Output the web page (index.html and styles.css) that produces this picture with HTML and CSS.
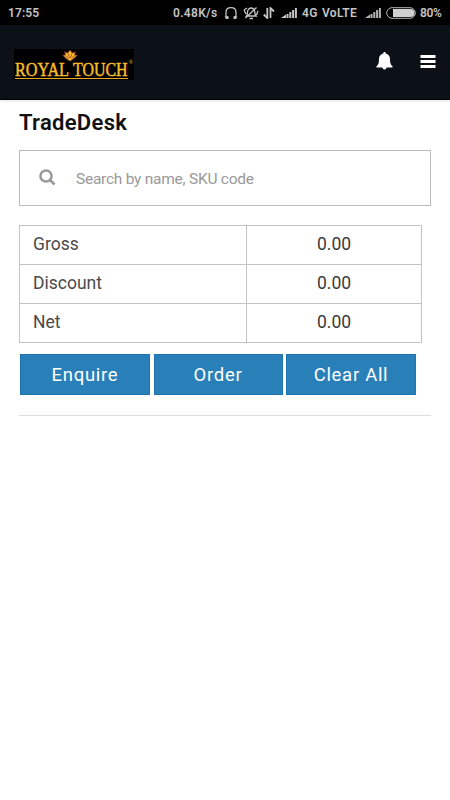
FILE: index.html
```html
<!DOCTYPE html>
<html lang="en">
<head>
    <meta charset="UTF-8">
    <meta name="viewport" content="width=device-width, initial-scale=1.0">
    <title>TradeDesk</title>
    <link rel="stylesheet" href="styles.css">
</head>
<body>
    <div class="status-bar">
        <span class="time">17:55</span>
        <span class="speed">0.48K/s</span>
        <svg class="icon-headphones" width="14" height="14" viewBox="0 0 14 14">
            <path d="M2 11V6.500C2 3.500 4 1.700 7 1.700S12 3.500 12 6.500V11" fill="none" stroke="#c4c4c4" stroke-width="1.300"/>
            <path d="M.7 10.500L4.500 10v3H2zM13.300 10.500L9.500 10v3H12z" fill="#c4c4c4"/>
        </svg>
        <svg class="icon-mute" width="16" height="14" viewBox="0 0 16 14">
            <path d="M3.500 10C5 8.500 4 5.500 5 4C6.500 1.300 10 1.300 11.300 4C12.200 6 11.500 8.500 13 10ZM6.500 12.500h3.500M2.500 12L13.500 1.500M1 4l2 4M15 5l-1.500 4M1 4l3-2" fill="none" stroke="#c4c4c4" stroke-width="1.300"/>
        </svg>
        <svg class="icon-arrows" width="12" height="12" viewBox="0 0 12 12">
            <path d="M4.300 1v10L.8 7.500M7.500 11V1L11 4.500" fill="none" stroke="#c4c4c4" stroke-width="1.800"/>
        </svg>
        <svg class="icon-signal" width="17" height="12" viewBox="0 0 17 12">
            <path d="M0 11l5-3.500V11zM5.500 7h2v4h-2zM8.300 5h2v6h-2zM11.100 3h2v8h-2zM13.900 1h2v10h-2z" fill="#c4c4c4"/>
        </svg>
        <span class="network">4G</span>
        <span class="volte">VoLTE</span>
        <svg class="icon-signal" width="17" height="12" viewBox="0 0 17 12">
            <path d="M0 11l5-3.500V11zM5.500 7h2v4h-2zM8.300 5h2v6h-2zM11.100 3h2v8h-2zM13.900 1h2v10h-2z" fill="#b4b4b4"/>
        </svg>
        <svg class="icon-battery" width="30" height="12" viewBox="0 0 30 12">
            <rect x=".7" y=".7" width="28.600" height="10.600" rx="5.300" fill="none" stroke="#b4b4b4"/>
            <path d="M7 2h17.500a4 4 0 0 1 0 8H7z" fill="#d0d0d0"/>
        </svg>
        <span class="percent">80%</span>
    </div>

    <header class="header">
        <svg class="logo" width="120" height="31" viewBox="0 0 120 31">
            <rect width="120" height="31" fill="#000"/>
            <path d="M56 .8l2.200 3L61.500 2.800l-.8 3 2.600.4L59.500 10 56 12.300 52.500 10 48.700 6.200l2.600-.4-.8-3 3.300 1z" fill="#f6b725" stroke="#5c1430" stroke-width=".8"/>
            <path d="M54.200 4.500l1.300 4.500M57.800 4.500l-1.300 4.500M51.500 6.500l3 3M60.500 6.500l-3 3" stroke="#7a2525" stroke-width=".6"/>
            <g class="logo-text">
                <text x="1" y="26.500" textLength="54" lengthAdjust="spacingAndGlyphs">ROYAL</text>
                <text x="59" y="26.500" textLength="54.500" lengthAdjust="spacingAndGlyphs">TOUCH</text>
            </g>
            <path d="M1 29.500h113" stroke="#e9a81f" stroke-width="1.200"/>
            <text class="logo-mark" x="114.500" y="15">®</text>
        </svg>
        <div class="header-actions">
            <svg width="17" height="18" viewBox="0 0 17 18">
                <path d="M8.500 0c.8 0 1.200.5 1.200 1.400C12.500 2 14 4 14 7c0 4 .7 6 2.700 7.500 0 .7-.4 1-1 1H10.500a2 2 0 0 1-4 0H1.300c-.6 0-1-.3-1-1C2.300 13 3 11 3 7c0-3 1.500-5 4.300-5.600C7.300.5 7.700 0 8.500 0z" fill="#fff"/>
            </svg>
            <svg width="16" height="13" viewBox="0 0 16 13">
                <path d="M.5 0h15v3H.5zM.5 5h15v3H.5zM.5 10h15v3H.5z" fill="#fff"/>
            </svg>
        </div>
    </header>

    <main class="content">
        <h1>TradeDesk</h1>

        <label class="search">
            <svg width="17" height="17" viewBox="0 0 17 17">
                <circle cx="7" cy="7" r="5.600" fill="none" stroke="#999" stroke-width="2.500"/>
                <path d="M11 11l4.500 4.500" stroke="#999" stroke-width="2.700"/>
            </svg>
            <input type="text" placeholder="Search by name, SKU code">
        </label>

        <table class="totals">
            <tr>
                <td class="label">Gross</td>
                <td class="value">0.00</td>
            </tr>
            <tr>
                <td class="label">Discount</td>
                <td class="value">0.00</td>
            </tr>
            <tr>
                <td class="label">Net</td>
                <td class="value">0.00</td>
            </tr>
        </table>

        <div class="buttons">
            <button>Enquire</button>
            <button>Order</button>
            <button>Clear All</button>
        </div>

        <hr>
    </main>
</body>
</html>
```
FILE: styles.css
```css
* {
    box-sizing: border-box;
    margin: 0;
    padding: 0;
}

body {
    font-family: Roboto, sans-serif;
    background-color: #fff;
    color: #4a4a4a;
}

svg {
    display: block;
    flex-shrink: 0;
}

.status-bar {
    display: flex;
    align-items: center;
    height: 25px;
    padding: 1px 8px 0;
    background-color: #000;
    color: #c4c4c4;
    font-size: 12px;
    font-weight: 600;
    letter-spacing: 0.3px;
    white-space: nowrap;
}

.time {
    width: 165px;
    letter-spacing: 0.1px;
}

.speed {
    width: 51px;
}

.icon-headphones {
    margin-right: 5px;
}

.icon-mute {
    margin-right: 4px;
}

.icon-arrows {
    margin-right: 6px;
}

.icon-signal {
    margin-right: 4px;
}

.network {
    width: 20px;
}

.volte {
    width: 43px;
}

.icon-battery {
    margin-right: 4px;
}

.percent {
    letter-spacing: -0.3px;
}

.header {
    display: flex;
    align-items: center;
    justify-content: space-between;
    height: 75px;
    padding: 4px 14px 0;
    background-color: #0c1118;
    border-bottom: 1px solid #000;
    box-shadow: 0 1px 3px rgba(0, 0, 0, 0.12);
}

.logo-text {
    font-family: "Liberation Serif", serif;
    font-size: 19px;
    fill: #f8bd2a;
    stroke: #f8bd2a;
    stroke-width: 0.5px;
}

.logo-mark {
    font-family: "Liberation Serif", serif;
    font-size: 6px;
    font-weight: bold;
    fill: #d69b2b;
}

.header-actions {
    display: flex;
    align-items: center;
    gap: 27px;
    margin-top: -6px;
}

.content {
    padding: 9px 19px 0;
}

h1 {
    height: 41px;
    color: #111;
    font-size: 22px;
    font-weight: 600;
    line-height: 27px;
    letter-spacing: 0.3px;
}

.search {
    display: flex;
    align-items: center;
    gap: 20px;
    height: 56px;
    padding: 0 19px;
    border: 1px solid #bbb;
}

.search svg {
    margin-top: -2px;
}

.search input {
    flex: 1;
    height: 40px;
    padding-top: 1px;
    border: none;
    outline: none;
    font-family: inherit;
    font-size: 15.5px;
    letter-spacing: -0.25px;
}

.search input::placeholder {
    color: #999;
}

.totals {
    width: 403px;
    margin-top: 19px;
    border-collapse: collapse;
    table-layout: fixed;
    font-size: 17.5px;
}

.totals td {
    height: 39px;
    padding-bottom: 2px;
    border: 1px solid #c4c4c4;
    line-height: 20px;
}

.totals .label {
    width: 227px;
    padding-left: 13px;
}

.totals .value {
    text-align: center;
    color: #3a3a3a;
}

.buttons {
    display: grid;
    grid-template-columns: 130px 129px 130px;
    column-gap: 3.5px;
    width: 396px;
    margin: 11px 0 0 1px;
}

.buttons button {
    height: 41px;
    border: 1px solid #1b75b3;
    background-color: #2980b9;
    color: #fff;
    font-family: inherit;
    font-size: 18.5px;
    letter-spacing: 0.7px;
}

hr {
    margin-top: 20px;
    border: none;
    border-top: 1px solid #ddd;
}
```
